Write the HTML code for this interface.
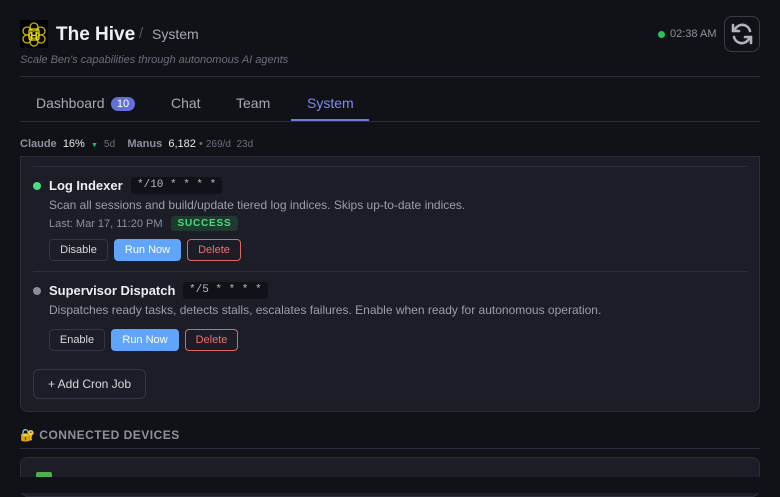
<!DOCTYPE html>
<html><head><style>
*{box-sizing:border-box;margin:0;padding:0}
body{width:780px;height:493px;background:#111217;font-family:"Liberation Sans",sans-serif;color:#e5e7eb;position:relative;overflow:hidden}
.a{position:absolute}
.btn{position:absolute;height:22px;border-radius:4px;font-size:11px;line-height:20px;text-align:center;border:1px solid #343645;color:#d8d9de}
.run{background:#60a5fa;border-color:#60a5fa;color:#fff}
.del{border-color:#e06565;color:#f07070}
.code{position:absolute;background:#111217;border-radius:3px;font-family:"Liberation Mono",monospace;font-size:11px;color:#b8bac4;height:17px;line-height:17px;padding:0 6px}
</style></head><body>
<svg class="a" style="left:20px;top:20px" width="28" height="28" viewBox="0 0 28 28"><rect width="28" height="28" fill="#000"/><g fill="none" stroke="#c9b800" stroke-width="1.3"><circle cx="14" cy="7" r="4"/><circle cx="7" cy="11" r="4"/><circle cx="21" cy="11" r="4"/><circle cx="7" cy="19" r="4"/><circle cx="21" cy="19" r="4"/><circle cx="14" cy="22" r="4"/><rect x="9" y="9" width="10" height="11" rx="2" stroke="#f0e000"/></g><text x="14" y="19" font-size="10" font-weight="bold" fill="#f0e000" text-anchor="middle" font-family="Liberation Sans">H</text></svg>
<div class="a" style="left:56px;top:24px;font-size:19px;font-weight:bold;color:#f0f0f2">The Hive</div>
<div class="a" style="left:139px;top:25px;font-size:15px;color:#555866">/</div>
<div class="a" style="left:152px;top:26px;font-size:14px;color:#a6a8b3">System</div>
<div class="a" style="left:20px;top:54px;font-size:11px;font-style:italic;color:#6b6e7c">Scale Ben's capabilities through autonomous AI agents</div>
<div class="a" style="left:658px;top:31px;width:7px;height:7px;border-radius:50%;background:#22c55e"></div>
<div class="a" style="left:670px;top:28px;font-size:11px;color:#8e909c">02:38 AM</div>
<div class="a" style="left:724px;top:16px;width:36px;height:36px;border:1px solid #3a3c4a;border-radius:8px"></div>
<svg class="a" style="left:730px;top:22px" width="24" height="24" viewBox="0 0 24 24" fill="none" stroke="#b0b3c0" stroke-width="2.6" stroke-linecap="round" stroke-linejoin="round"><path d="M20 9A8 8 0 0 0 5.5 6.5L3 9"/><path d="M3 3v6h6"/><path d="M4 15a8 8 0 0 0 14.5 2.5L21 15"/><path d="M21 21v-6h-6"/></svg>
<div class="a" style="left:20px;top:76px;width:740px;height:1px;background:#2d2e3c"></div>
<div class="a" style="left:36px;top:95px;font-size:14px;color:#a6a8b3">Dashboard</div>
<div class="a" style="left:111px;top:97px;width:24px;height:14px;border-radius:7px;background:#6370d8;color:#fff;font-size:11px;line-height:14px;text-align:center">10</div>
<div class="a" style="left:171px;top:95px;font-size:14px;color:#a6a8b3">Chat</div>
<div class="a" style="left:236px;top:95px;font-size:14px;color:#a6a8b3">Team</div>
<div class="a" style="left:307px;top:95px;font-size:14px;color:#7c8cf0">System</div>
<div class="a" style="left:20px;top:121px;width:740px;height:1px;background:#2d2e3c"></div>
<div class="a" style="left:291px;top:119px;width:78px;height:2px;background:#6a7ae0"></div>
<div class="a" style="left:20px;top:138px;font-size:11px;color:#9c9ea9;white-space:nowrap"><b style="color:#8e909c">Claude</b>&nbsp; <span style="color:#e5e7eb">16%</span> &nbsp;<span style="color:#22c55e;font-size:7px">▼</span>&nbsp; <span style="font-size:10px;color:#6b6e7c">5d</span> &nbsp;&nbsp;&nbsp;<b style="color:#8e909c">Manus</b>&nbsp; <span style="color:#e5e7eb">6,182</span> <span style="color:#6b6e7c">•</span> <span style="font-size:10px;color:#6b6e7c">269/d &nbsp;23d</span></div>
<div class="a" style="left:20px;top:156px;width:740px;height:256px;background:#1c1d27;border:1px solid #2d2e3c;border-radius:0 0 8px 8px"></div>
<div class="a" style="left:33px;top:166px;width:714px;height:1px;background:#2d2e3c"></div>
<div class="a" style="left:33px;top:182px;width:8px;height:8px;border-radius:50%;background:#4ade80"></div>
<div class="a" style="left:49px;top:178px;font-size:13px;font-weight:bold;color:#eceef2">Log Indexer</div>
<div class="code" style="left:131px;top:177px">*/10 * * * *</div>
<div class="a" style="left:49px;top:198px;font-size:12px;color:#9c9ea9">Scan all sessions and build/update tiered log indices. Skips up-to-date indices.</div>
<div class="a" style="left:49px;top:218px;font-size:11px;color:#8e909c">Last: Mar 17, 11:20 PM</div>
<div class="a" style="left:171px;top:216px;width:67px;height:15px;border-radius:3px;background:#1f3a2e;color:#4ade80;font-size:10px;font-weight:bold;line-height:15px;text-align:center;letter-spacing:.8px">SUCCESS</div>
<div class="btn" style="left:49px;top:239px;width:59px">Disable</div>
<div class="btn run" style="left:114px;top:239px;width:67px">Run Now</div>
<div class="btn del" style="left:187px;top:239px;width:54px">Delete</div>
<div class="a" style="left:33px;top:271px;width:714px;height:1px;background:#2d2e3c"></div>
<div class="a" style="left:33px;top:287px;width:8px;height:8px;border-radius:50%;background:#8a8c98"></div>
<div class="a" style="left:49px;top:283px;font-size:13px;font-weight:bold;color:#eceef2">Supervisor Dispatch</div>
<div class="code" style="left:183px;top:282px">*/5 * * * *</div>
<div class="a" style="left:49px;top:303px;font-size:12px;color:#9c9ea9">Dispatches ready tasks, detects stalls, escalates failures. Enable when ready for autonomous operation.</div>
<div class="btn" style="left:49px;top:329px;width:56px">Enable</div>
<div class="btn run" style="left:111px;top:329px;width:68px">Run Now</div>
<div class="btn del" style="left:185px;top:329px;width:53px">Delete</div>
<div class="btn" style="left:33px;top:369px;width:113px;height:30px;line-height:28px;font-size:12px;border-radius:6px">+ Add Cron Job</div>
<div class="a" style="left:20px;top:428px;font-size:12px;font-weight:bold;color:#8e909c;letter-spacing:.5px">🔐 CONNECTED DEVICES</div>
<div class="a" style="left:20px;top:448px;width:740px;height:1px;background:#2d2e3c"></div>
<div class="a" style="left:20px;top:457px;width:740px;height:40px;background:#1c1d27;border:1px solid #2d2e3c;border-radius:8px"></div>
<div class="a" style="left:36px;top:472px;width:16px;height:8px;background:#4caf50;border-radius:2px"></div>
<div class="a" style="left:0;top:477px;width:780px;height:16px;background:#111217"></div>
</body></html>
